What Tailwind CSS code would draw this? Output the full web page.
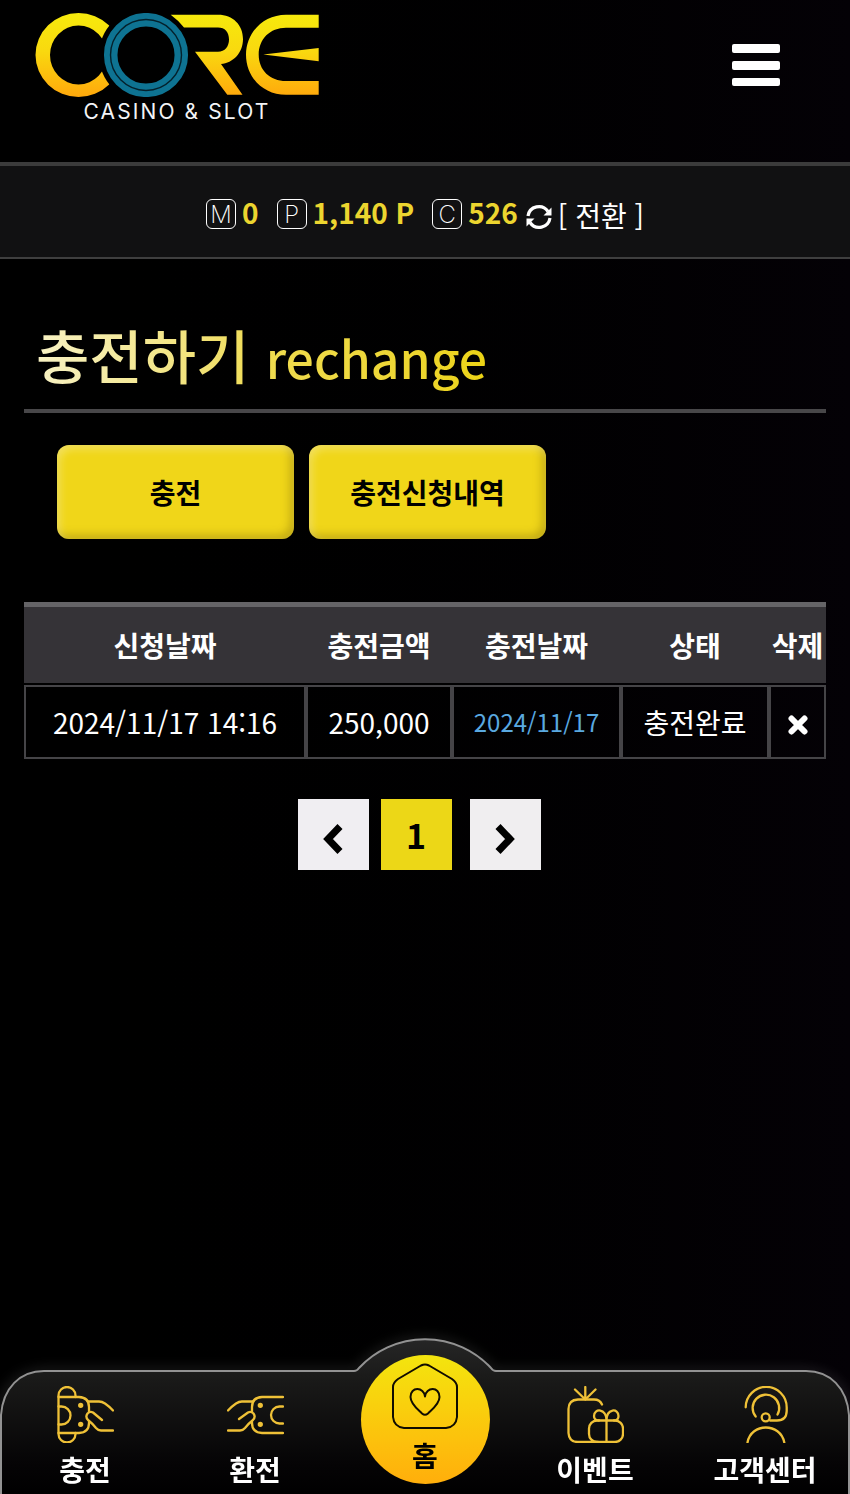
<!DOCTYPE html>
<html lang="ko">
<head>
    <meta charset="UTF-8" />
    <meta name="viewport" content="width=device-width, initial-scale=1.0" />
    <title>CORE - 충전하기</title>
    <script src="https://cdn.jsdelivr.net/npm/@tailwindcss/browser@4"></script>
    <style>
        body {
            font-family: 'Noto Sans CJK KR', sans-serif;
        }
    </style>
</head>

<body class="min-h-screen bg-linear-to-r from-black to-[#040106] text-white">
    <header class="flex h-[162px] items-start justify-between pt-[13px] pr-[70px] pl-[35px]">
        <a href="#" class="flex flex-col items-center" aria-label="CORE CASINO &amp; SLOT">
            <svg class="h-[84px] w-[284px]" viewBox="35 13 284 84">
                <defs>
                    <linearGradient id="gold" gradientUnits="userSpaceOnUse" x1="0" y1="13" x2="0" y2="97">
                        <stop offset="0" stop-color="#f6ea0c" />
                        <stop offset="0.45" stop-color="#f9d90f" />
                        <stop offset="1" stop-color="#ffa80c" />
                    </linearGradient>
                    <mask id="cut">
                        <rect x="30" y="0" width="300" height="110" fill="#fff" />
                        <circle cx="146" cy="55" r="47" fill="#000" />
                    </mask>
                </defs>
                <path mask="url(#cut)" fill="url(#gold)" fill-rule="evenodd" d="M35.500 55a43 42 0 1 0 86 0a43 42 0 1 0 -86 0ZM50 55a28.500 29.500 0 1 0 57 0a28.500 29.500 0 1 0 -57 0Z" />
                <ellipse cx="146" cy="55" rx="35.300" ry="35.300" fill="none" stroke="#0e7392" stroke-width="13.500" />
                <ellipse cx="146" cy="55" rx="35.500" ry="35.500" fill="none" stroke="#04212c" stroke-width="1.400" />
                <path fill="url(#gold)" d="M170.700 14.700H218C233 14.700 243 25 243 39C243 53 233 63 221 64L242.500 94.700H227.300L195 51.800H218C225 51.800 229 46.500 229 39.500C229 32 225 27.400 218 27.400H184Q178 20 170.700 14.700Z" />
                <path fill="url(#gold)" d="M318.700 14.700H286C263 14.700 246 33 246 54.700C246 77 263 94.700 286 94.700H318.700V81H286C270 81 258.700 70 258.700 54.700C258.700 39 270 27.700 286 27.700H318.700Z" />
                <path fill="url(#gold)" d="M263.300 54.500L318.700 48V61.300Z" />
            </svg>
            <span class="mt-[5px] font-[Inter] text-[21px] leading-5 tracking-widest text-gray-100">CASINO &amp; SLOT</span>
        </a>
        <button type="button" class="mt-[31px] flex w-12 flex-col gap-2" aria-label="메뉴">
            <span class="h-[9px] w-full rounded-xs bg-white"></span>
            <span class="h-[9px] w-full rounded-xs bg-white"></span>
            <span class="h-[8px] w-full rounded-xs bg-white"></span>
        </button>
    </header>

    <section class="border-t-4 border-b-2 border-t-[#3b3b3b] border-b-[#3f3f3f] bg-[#111112]">
        <div class="flex h-[91px] items-center justify-center text-[28px] leading-8">
            <div class="flex items-center gap-1.5">
                <span class="mt-1 flex size-[30px] items-center justify-center rounded-md border border-white pt-0.5 font-[Inter] text-2xl font-extralight">M</span>
                <strong class="font-bold text-[#ecd52f]">0</strong>
            </div>
            <div class="ml-[18px] flex items-center gap-1.5">
                <span class="mt-1 flex size-[30px] items-center justify-center rounded-md border border-white pt-0.5 font-[Inter] text-2xl font-extralight">P</span>
                <strong class="font-bold text-[#ecd52f]">1,140 P</strong>
            </div>
            <div class="ml-[18px] flex items-center gap-1.5">
                <span class="mt-1 flex size-[30px] items-center justify-center rounded-md border border-white pt-0.5 font-[Inter] text-2xl font-extralight">C</span>
                <strong class="font-bold text-[#ecd52f]">526</strong>
            </div>
            <button type="button" class="ml-2 flex items-center gap-1.5 pt-1.5">
                <svg class="mt-1 size-[26px]" viewBox="0 0 26 26" fill="none" stroke="#fff" stroke-width="3.200">
                    <path d="M2 12A11 11 0 0 1 22 7.500M24 14A11 11 0 0 1 4 18.500" />
                    <path d="M25.500 3.500V11.500H17.500ZM.5 22.500V14.500H8.500Z" fill="#fff" stroke="none" />
                </svg>
                <span>[ 전환 ]</span>
            </button>
        </div>
    </section>

    <main class="px-6 pt-[59px] pb-44">
        <h1 class="border-b-4 border-[#484749] pb-4 pl-3 text-[58px] leading-[72px] font-medium">
            <span class="bg-linear-to-r from-[#f8f2c4] via-[#f0dc50] to-[#ecd313] bg-clip-text text-transparent">충전하기 <span class="text-[50px]">rechange</span></span>
        </h1>

        <div class="mt-8 flex gap-[15px] pl-[33px]">
            <button type="button" class="h-[94px] w-[237px] rounded-xl bg-[#f0d619] text-[28px] font-bold text-black shadow-[inset_3px_4px_8px_rgba(255,255,255,0.3),inset_-4px_-4px_8px_rgba(110,90,0,0.35)]">충전</button>
            <button type="button" class="h-[94px] w-[237px] rounded-xl bg-[#f0d619] text-[28px] font-bold text-black shadow-[inset_3px_4px_8px_rgba(255,255,255,0.3),inset_-4px_-4px_8px_rgba(110,90,0,0.35)]">충전신청내역</button>
        </div>

        <table class="mt-[63px] w-full table-fixed border-separate border-spacing-0 text-center text-[28px] leading-8">
            <colgroup>
                <col class="w-[282px]" />
                <col class="w-[146px]" />
                <col class="w-[169px]" />
                <col class="w-[148px]" />
                <col class="w-[57px]" />
            </colgroup>
            <thead class="bg-[#353337] whitespace-nowrap">
                <tr class="h-[81px]">
                    <th scope="col" class="border-t-5 border-[#656467] p-0 font-bold">신청날짜</th>
                    <th scope="col" class="border-t-5 border-[#656467] p-0 font-bold">충전금액</th>
                    <th scope="col" class="border-t-5 border-[#656467] p-0 font-bold">충전날짜</th>
                    <th scope="col" class="border-t-5 border-[#656467] p-0 font-bold">상태</th>
                    <th scope="col" class="border-t-5 border-[#656467] p-0 font-bold">삭제</th>
                </tr>
            </thead>
            <tbody class="before:block before:h-[2px] before:content-['']">
                <tr class="h-[74px]">
                    <td class="border-2 border-[#454447] p-0">2024/11/17 14:16</td>
                    <td class="border-2 border-[#454447] p-0">250,000</td>
                    <td class="border-2 border-[#454447] p-0 text-2xl text-[#5aa9e0]">2024/11/17</td>
                    <td class="border-2 border-[#454447] p-0">충전완료</td>
                    <td class="border-2 border-[#454447] p-0">
                        <button type="button" class="block w-full pt-1.5" aria-label="삭제">
                            <svg class="mx-auto size-5" viewBox="0 0 20 20" stroke="#fff" stroke-width="6" stroke-linecap="round">
                                <path d="M3.500 3.500L16.500 16.500M16.500 3.500L3.500 16.500" />
                            </svg>
                        </button>
                    </td>
                </tr>
            </tbody>
        </table>

        <div class="mt-10 flex justify-center gap-3 pr-3">
            <button type="button" class="flex size-[71px] items-center justify-center bg-[#f0eef2] pt-2" aria-label="이전">
                <svg class="h-[30px] w-5" viewBox="0 0 20 30" fill="none" stroke="#000" stroke-width="7">
                    <path d="M17 2.500L5 15L17 27.500" />
                </svg>
            </button>
            <button type="button" class="size-[71px] bg-[#ecd717] text-[34px] leading-10 font-bold text-black">1</button>
            <button type="button" class="ml-1.5 flex size-[71px] items-center justify-center bg-[#f0eef0] pt-2" aria-label="다음">
                <svg class="h-[30px] w-5" viewBox="0 0 20 30" fill="none" stroke="#000" stroke-width="7">
                    <path d="M3 2.500L15 15L3 27.500" />
                </svg>
            </button>
        </div>
    </main>

    <nav class="fixed inset-x-0 bottom-0 h-[156px]">
        <svg class="absolute inset-0 size-full overflow-visible" viewBox="0 0 850 156" preserveAspectRatio="none" fill="none">
            <defs>
                <linearGradient id="panel" x1="0" y1="0" x2="0" y2="1">
                    <stop offset="0" stop-color="#262626" />
                    <stop offset="0.25" stop-color="#1a1a19" />
                    <stop offset="0.8" stop-color="#050405" />
                    <stop offset="1" stop-color="#000" />
                </linearGradient>
                <filter id="glow" x="-5%" y="-20%" width="110%" height="140%">
                    <feGaussianBlur stdDeviation="6" />
                </filter>
            </defs>
            <path filter="url(#glow)" stroke="#fff" stroke-opacity="0.25" stroke-width="3" d="M1 157V77Q3 36 44 33H354Q357 33 359 30A90 90 0 0 1 491 30Q493 33 496 33H806Q847 36 849 77V157" />
            <path fill="url(#panel)" stroke="#929292" stroke-width="2" d="M1 158V77C3 50 20 33 44 33H354Q357 33 359 30A90 90 0 0 1 491 30Q493 33 496 33H806C830 33 847 50 849 77V158" />
        </svg>
        <div class="relative grid h-full grid-cols-5 text-[28px] leading-7 font-bold">
            <a href="#" class="flex flex-col items-center pt-12">
                <svg class="size-[57px]" viewBox="0 0 57 57" fill="none" stroke="#efc137" stroke-width="2.300" stroke-linecap="round" stroke-linejoin="round">
                    <path d="M18.500 11V9.500a8.500 8.500 0 0 0 -17 0V48a8.500 8.500 0 0 0 17 0V47" />
                    <path d="M1.500 11H22Q32 11.500 32 21V26M1.500 47H22Q32 46.500 32 37V36" />
                    <path d="M1.500 20.500H4.500a9 9 0 0 1 0 18H1.500" />
                    <path d="M31 15.500H42Q45 15.500 48 17.500Q53 21 56 24.500" />
                    <path d="M45 34L36 26.500Q33 25 30.500 27.500Q28 31 31 34Q36 38 39 42Q41 44.500 44 44.500H56" />
                    <circle cx="23.700" cy="19.300" r="1.500" fill="#efc137" />
                    <circle cx="23.700" cy="38.300" r="1.500" fill="#efc137" />
                </svg>
                <span class="mt-3">충전</span>
            </a>
            <a href="#" class="flex flex-col items-center pt-12">
                <svg class="size-[57px]" viewBox="0 0 57 57" fill="none" stroke="#efc137" stroke-width="2.300" stroke-linecap="round" stroke-linejoin="round">
                    <path d="M56 11H35Q25 11.500 25 21V26M56 47H35Q25 46.500 25 37V36" />
                    <path d="M56 20.500H52.500a8.500 8.500 0 0 0 0 17H56" />
                    <path d="M26 15.500H15Q12 15.500 9 17.500Q4 21 1 24.500" />
                    <path d="M12 33L21 26.500Q24 25 26.500 27.500Q29 31 26 34Q21 38 18 42Q16 44.500 13 44.500H1" />
                    <circle cx="33.300" cy="19.300" r="1.500" fill="#efc137" />
                    <circle cx="33.300" cy="38.300" r="1.500" fill="#efc137" />
                </svg>
                <span class="mt-3">환전</span>
            </a>
            <a href="#" class="mt-[17px] flex size-[129px] flex-col items-center justify-self-center rounded-full bg-linear-to-b from-[#f3e50e] to-[#ffae0b] pt-2 text-black">
                <svg class="size-[66px]" viewBox="0 0 66 66" fill="none" stroke="#100c00" stroke-width="2" stroke-linejoin="round">
                    <path d="M29 2.500Q33 .5 37 2.500L60 16Q65 19.500 65 24V54Q64 64 54 65H12Q2 64 1 54V24Q1 19.500 6 16Z" />
                    <path d="M33 33.500C32 24 18.500 23 18.500 34C18.500 41 26 46.500 30 50.500Q33 53 36 50.500C40 46.500 47.500 41 47.500 34C47.500 23 34 24 33 33.500Z" />
                </svg>
                <span class="mt-3">홈</span>
            </a>
            <a href="#" class="flex flex-col items-center pt-12">
                <svg class="size-[57px]" viewBox="0 0 57 57" fill="none" stroke="#efc137" stroke-width="2.300" stroke-linecap="round" stroke-linejoin="round">
                    <path d="M18.300 1V13.500M8 3.500L18.300 13.500L28.500 3.500" />
                    <path d="M35 18.500Q33 13.500 27 13.500H11Q1.500 14 1.500 23V47Q2 56 11 56H31" />
                    <rect x="22" y="34.500" width="34" height="21.500" rx="8" />
                    <path d="M39.500 34.500V56M39.500 34.500C39.500 22 27 22 27 30Q27 34.500 32 34.500M39.500 34.500C39.500 22 51.500 22 51.500 30Q51.500 34.500 47 34.500" />
                </svg>
                <span class="mt-3">이벤트</span>
            </a>
            <a href="#" class="flex flex-col items-center pt-12">
                <svg class="size-[57px]" viewBox="0 0 57 57" fill="none" stroke="#efc137" stroke-width="2.300" stroke-linecap="round" stroke-linejoin="round">
                    <path d="M8.700 21.300A20.500 20.500 0 0 1 49.700 21.500V25Q49.500 34.500 40 34.500H33" />
                    <path d="M18.700 30.500A13.300 13.300 0 1 1 40.500 28.500" />
                    <circle cx="28.700" cy="31.300" r="4" />
                    <path d="M10.500 56.500C14 36.500 43.500 36.500 47.300 56.500" />
                </svg>
                <span class="mt-3">고객센터</span>
            </a>
        </div>
    </nav>
</body>
</html>
